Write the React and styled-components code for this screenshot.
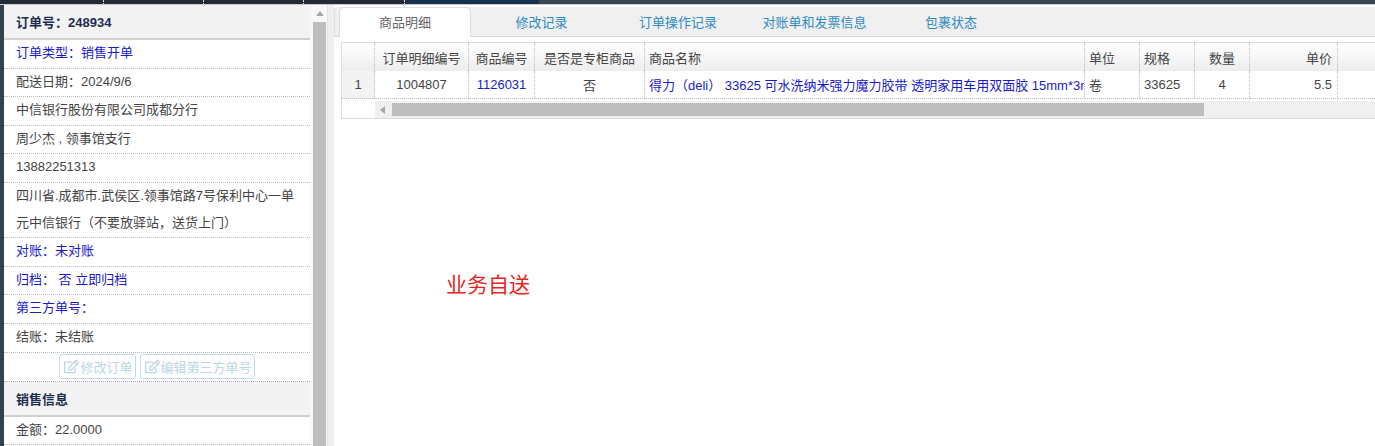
import React from 'react';
import styled, { createGlobalStyle } from 'styled-components';
import { FaRegEdit } from 'react-icons/fa';

const GlobalStyle = createGlobalStyle`
  html, body {
    margin: 0;
    padding: 0;
    background: #fff;
    overflow: hidden;
  }
  body {
    font-family: "Liberation Sans", "Noto Sans CJK SC", sans-serif;
    font-size: 13px;
    color: #444;
  }
  * {
    box-sizing: border-box;
  }
`;

const Page = styled.div`
  width: 1375px;
  height: 446px;
  display: flex;
  flex-direction: column;
  overflow: hidden;
`;

const TopBar = styled.div`
  flex: 0 0 5px;
  display: flex;
  background: #36454f;
  border-bottom: 1px solid #c9c9c9;
`;

const TopCell = styled.div`
  flex: 0 0 ${(p) => p.$w}px;
  background: ${(p) => p.$bg};
  border-right: ${(p) => (p.$dot ? '1px dotted #ddd' : 'none')};
`;

const Main = styled.div`
  flex: 1;
  display: flex;
  min-height: 0;
`;

const LeftEdge = styled.div`
  flex: 0 0 4px;
  background: #34424f;
`;

const Sidebar = styled.div`
  flex: 0 0 306px;
  background: #fff;
`;

const SideHead = styled.div`
  height: ${(p) => p.$h}px;
  padding-left: 12px;
  display: flex;
  align-items: center;
  font-weight: bold;
  color: #1d2d52;
  background: #f3f3f3;
  border-bottom: 2px solid #d0d0d0;
`;

const SideRow = styled.div`
  padding: 0 12px 1px;
  line-height: 26.6px;
  border-bottom: 1px dotted #bbb;
  color: ${(p) => (p.$link ? '#1a1acb' : '#444')};
`;

const ButtonRow = styled.div`
  height: 29px;
  padding-top: 1px;
  display: flex;
  justify-content: center;
  gap: 4px;
  border-bottom: 1px dotted #aaa;
`;

const EditButton = styled.button`
  height: 25px;
  padding: 0 2px 0 4px;
  display: flex;
  align-items: center;
  gap: 1px;
  font: inherit;
  color: #b7d8e4;
  background: #fff;
  border: 1px solid #c0dde7;
  border-radius: 3px;
  svg {
    font-size: 15px;
  }
`;

const SideScroll = styled.div`
  flex: 0 0 18px;
  padding: 6px 1px 0 3px;
  background: #f8f8f8;
  border-right: 1px solid #e2e2e2;
`;

const ArrowUp = styled.div`
  width: 0;
  margin: 0 auto 6px;
  border-left: 4px solid transparent;
  border-right: 4px solid transparent;
  border-bottom: 5px solid #a6a6a6;
`;

const SideThumb = styled.div`
  height: 440px;
  background: #bebebe;
`;

const Gutter = styled.div`
  flex: 0 0 6px;
  background: #efefef;
`;

const Content = styled.div`
  flex: 1;
  min-width: 0;
  overflow: hidden;
`;

const TabBar = styled.div`
  height: 30px;
  margin-top: 2px;
  padding-left: 4px;
  display: flex;
  gap: 4.5px;
  background: #f0f0f0;
  border-left: 1px solid #ddd;
  border-bottom: 1px solid #d5d5d5;
  border-top-left-radius: 4px;
`;

const Tab = styled.div`
  flex: 0 0 132px;
  height: 30px;
  display: flex;
  align-items: center;
  justify-content: center;
  padding-bottom: 2px;
  color: ${(p) => (p.$active ? '#666' : '#2e8bc0')};
  background: ${(p) => (p.$active ? '#fff' : 'transparent')};
  border: ${(p) => (p.$active ? '1px solid #ddd' : '1px solid transparent')};
  border-bottom: none;
  border-top-left-radius: 5px;
  border-top-right-radius: 5px;
`;

const GridBox = styled.div`
  margin: 5px 0 0 7px;
  border: 1px solid #ddd;
  border-right: none;
  overflow: hidden;
`;

const Grid = styled.table`
  width: 1041px;
  table-layout: fixed;
  border-collapse: separate;
  border-spacing: 0;
`;

const HeadCell = styled.th`
  height: 28px;
  padding: 0 ${(p) => (p.$align === 'right' ? '5px' : '4px')} 0 4px;
  font-weight: normal;
  color: #444;
  text-align: ${(p) => p.$align || 'center'};
  white-space: nowrap;
  overflow: hidden;
  background: linear-gradient(#fff, #ededed);
  border-right: 1px dotted #bbb;
`;

const Cell = styled.td`
  height: 28px;
  padding: 0 ${(p) => (p.$align === 'right' ? '5px' : '3px')} 0 ${(p) => (p.$align === 'left' ? '4px' : '3px')};
  color: ${(p) => (p.$link ? '#1a1acb' : '#444')};
  text-align: ${(p) => p.$align || 'center'};
  white-space: nowrap;
  overflow: hidden;
  background: ${(p) => (p.$num ? '#f3f3f3' : '#fff')};
  border-right: 1px dotted #bbb;
  border-bottom: 1px dotted #bbb;
`;

const GridScroll = styled.div`
  height: 17px;
  margin: 2px 0 0 33px;
  padding-top: 2px;
  display: flex;
  background: #f0f0f0;
`;

const ArrowCell = styled.div`
  flex: 0 0 17px;
  display: flex;
  align-items: center;
  padding: 0 0 2px 5px;
`;

const ArrowLeft = styled.div`
  border-top: 4px solid transparent;
  border-bottom: 4px solid transparent;
  border-right: 5px solid #a6a6a6;
`;

const GridThumb = styled.div`
  width: 812px;
  height: 13px;
  background: #bebebe;
`;

const Note = styled.div`
  margin: 152px 0 0 112px;
  font-size: 21px;
  line-height: 27px;
  color: #e8261c;
`;

const columns = [
  { w: 33, title: '' },
  { w: 94, title: '订单明细编号' },
  { w: 66, title: '商品编号' },
  { w: 110, title: '是否是专柜商品' },
  { w: 440, title: '商品名称', align: 'left' },
  { w: 55, title: '单位', align: 'left' },
  { w: 55, title: '规格', align: 'left' },
  { w: 55, title: '数量' },
  { w: 88, title: '单价', align: 'right' },
  { w: 45, title: '' },
];

const tabs = ['商品明细', '修改记录', '订单操作记录', '对账单和发票信息', '包裹状态'];

const App = () => (
  <Page>
    <GlobalStyle />
    <TopBar>
      <TopCell $w={104} $bg="#222a33" $dot />
      <TopCell $w={100} $bg="#222a33" $dot />
      <TopCell $w={100} $bg="#222a33" $dot />
      <TopCell $w={101} $bg="#222a33" $dot />
      <TopCell $w={134} $bg="#17304f" />
    </TopBar>
    <Main>
      <LeftEdge />
      <Sidebar>
        <SideHead $h={35}>订单号：248934</SideHead>
        <SideRow $link>订单类型：销售开单</SideRow>
        <SideRow>配送日期：2024/9/6</SideRow>
        <SideRow>中信银行股份有限公司成都分行</SideRow>
        <SideRow>周少杰 , 领事馆支行</SideRow>
        <SideRow>13882251313</SideRow>
        <SideRow>四川省.成都市.武侯区.领事馆路7号保利中心一单元中信银行（不要放驿站，送货上门）</SideRow>
        <SideRow $link>对账：未对账</SideRow>
        <SideRow $link>归档： 否 立即归档</SideRow>
        <SideRow $link>第三方单号：</SideRow>
        <SideRow>结账：未结账</SideRow>
        <ButtonRow>
          <EditButton><FaRegEdit />修改订单</EditButton>
          <EditButton><FaRegEdit />编辑第三方单号</EditButton>
        </ButtonRow>
        <SideHead $h={35}>销售信息</SideHead>
        <SideRow>金额：22.0000</SideRow>
      </Sidebar>
      <SideScroll>
        <ArrowUp />
        <SideThumb />
      </SideScroll>
      <Gutter />
      <Content>
        <TabBar>
          {tabs.map((t, i) => (
            <Tab key={t} $active={i === 0}>{t}</Tab>
          ))}
        </TabBar>
        <GridBox>
          <Grid>
            <colgroup>
              {columns.map((c, i) => (
                <col key={i} style={{ width: c.w }} />
              ))}
            </colgroup>
            <thead>
              <tr>
                {columns.map((c, i) => (
                  <HeadCell key={i} $align={c.align}>{c.title}</HeadCell>
                ))}
              </tr>
            </thead>
            <tbody>
              <tr>
                <Cell $num>1</Cell>
                <Cell>1004807</Cell>
                <Cell $link>1126031</Cell>
                <Cell>否</Cell>
                <Cell $link $align="left">得力（deli） 33625 可水洗纳米强力魔力胶带 透明家用车用双面胶 15mm*3m</Cell>
                <Cell $align="left">卷</Cell>
                <Cell $align="left">33625</Cell>
                <Cell>4</Cell>
                <Cell $align="right">5.5</Cell>
                <Cell />
              </tr>
            </tbody>
          </Grid>
          <GridScroll>
            <ArrowCell><ArrowLeft /></ArrowCell>
            <GridThumb />
          </GridScroll>
        </GridBox>
        <Note>业务自送</Note>
      </Content>
    </Main>
  </Page>
);

export default App;
